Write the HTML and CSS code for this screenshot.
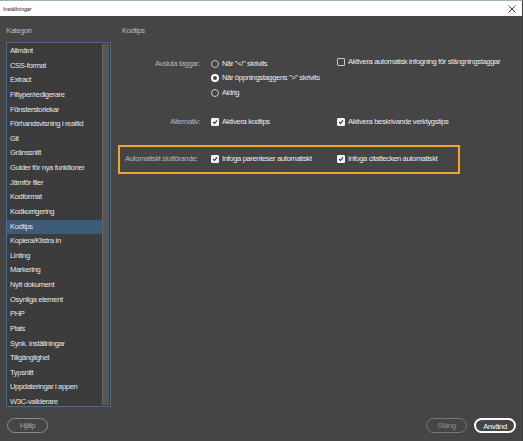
FILE: index.html
```html
<!DOCTYPE html>
<html lang="sv">
<head>
<meta charset="utf-8">
<title>Inställningar</title>
<link rel="stylesheet" href="styles.css">
</head>
<body>
<div class="window">
  <div class="titlebar">
    <span class="title">Inställningar</span>
    <svg class="close" width="8" height="8" viewBox="0 0 8 8"><path d="M0.5 0.5 L7.5 7.5 M7.5 0.5 L0.5 7.5" stroke="#222" stroke-width="0.9" fill="none"/></svg>
  </div>
  <div class="main">
    <div class="sidebar">
      <div class="heading">Kategori</div>
      <div class="list">
        <div class="items">
          <div class="item">Allmänt</div>
          <div class="item">CSS-format</div>
          <div class="item">Extract</div>
          <div class="item">Filtyper/redigerare</div>
          <div class="item">Fönsterstorlekar</div>
          <div class="item">Förhandsvisning i realtid</div>
          <div class="item">Git</div>
          <div class="item">Gränssnitt</div>
          <div class="item">Guider för nya funktioner</div>
          <div class="item">Jämför filer</div>
          <div class="item">Kodformat</div>
          <div class="item">Kodkorrigering</div>
          <div class="item selected">Kodtips</div>
          <div class="item">Kopiera/Klistra in</div>
          <div class="item">Linting</div>
          <div class="item">Markering</div>
          <div class="item">Nytt dokument</div>
          <div class="item">Osynliga element</div>
          <div class="item">PHP</div>
          <div class="item">Plats</div>
          <div class="item">Synk. inställningar</div>
          <div class="item">Tillgänglighet</div>
          <div class="item">Typsnitt</div>
          <div class="item">Uppdateringar i appen</div>
          <div class="item">W3C-validerare</div>
        </div>
        <div class="scrollbar"><div class="thumb"></div></div>
      </div>
    </div>
    <div class="content">
      <div class="heading pane-title">Kodtips</div>
      <div class="options">
        <div class="row">
          <div class="label">Avsluta taggar:</div>
          <div class="col">
            <div class="opt"><span class="radio"></span>När "&lt;/" skrivits</div>
            <div class="opt"><span class="radio on"></span>När öppningstaggens "&gt;" skrivits</div>
            <div class="opt"><span class="radio"></span>Aldrig</div>
          </div>
          <div class="col col2-up">
            <div class="opt"><span class="check"></span>Aktivera automatisk infogning för stängningstaggar</div>
          </div>
        </div>
        <div class="row">
          <div class="label">Alternativ:</div>
          <div class="col">
            <div class="opt"><span class="check on"><svg viewBox="0 0 8 8"><path d="M1.5 4.2 L3.3 6 L6.6 1.8" stroke="#2b2b2b" stroke-width="1.5" fill="none"/></svg></span>Aktivera kodtips</div>
          </div>
          <div class="col">
            <div class="opt"><span class="check on"><svg viewBox="0 0 8 8"><path d="M1.5 4.2 L3.3 6 L6.6 1.8" stroke="#2b2b2b" stroke-width="1.5" fill="none"/></svg></span>Aktivera beskrivande verktygstips</div>
          </div>
        </div>
        <div class="row boxed">
          <div class="label">Automatiskt slutförande:</div>
          <div class="col">
            <div class="opt"><span class="check on"><svg viewBox="0 0 8 8"><path d="M1.5 4.2 L3.3 6 L6.6 1.8" stroke="#2b2b2b" stroke-width="1.5" fill="none"/></svg></span>Infoga parenteser automatiskt</div>
          </div>
          <div class="col">
            <div class="opt"><span class="check on"><svg viewBox="0 0 8 8"><path d="M1.5 4.2 L3.3 6 L6.6 1.8" stroke="#2b2b2b" stroke-width="1.5" fill="none"/></svg></span>Infoga citattecken automatiskt</div>
          </div>
        </div>
      </div>
    </div>
  </div>
  <div class="footer">
    <button class="btn">Hjälp</button>
    <div class="footer-right">
      <button class="btn dim">Stäng</button>
      <button class="btn primary">Använd</button>
    </div>
  </div>
</div>
</body>
</html>
```
FILE: styles.css
```css
html, body {
  margin: 0;
  padding: 0;
}
body {
  width: 523px;
  height: 441px;
  overflow: hidden;
  background: #454545;
  font-family: "Liberation Sans", Arial, sans-serif;
  font-size: 7.6px;
  letter-spacing: -0.37px;
  color: #dcdcdc;
}
.window {
  width: 523px;
  height: 441px;
  box-sizing: border-box;
  border-top: 1px solid #9fb2b2;
  border-right: 1px solid #3a3a3a;
  display: flex;
  flex-direction: column;
}
.titlebar {
  height: 15px;
  background: #ffffff;
  display: flex;
  align-items: center;
  justify-content: space-between;
  padding: 0 6px 0 3px;
  flex: none;
}
.title {
  font-size: 5.3px;
  letter-spacing: 0;
  color: #111;
}
.close {
  display: block;
}
.main {
  display: flex;
  height: 391px;
  flex: none;
}
.sidebar {
  width: 105px;
  margin-left: 6px;
  display: flex;
  flex-direction: column;
}
.heading {
  height: 12px;
  line-height: 12px;
  margin-top: 9px;
  margin-bottom: 5px;
  color: #bababa;
}
.list {
  height: 365px;
  box-sizing: border-box;
  border: 1px solid #4d6a88;
  background: #3c3c3c;
  display: flex;
}
.items {
  flex: 1;
  padding-top: 1px;
}
.item {
  height: 14.63px;
  line-height: 14.63px;
  padding-left: 3px;
  color: #e6e6e6;
  white-space: nowrap;
}
.item.selected {
  background: #3e5a79;
}
.scrollbar {
  width: 7px;
  margin-right: 1px;
  padding: 1px 0;
  box-sizing: border-box;
}
.thumb {
  height: 100%;
  background: #565656;
  border-left: 1px solid #666;
  box-sizing: border-box;
}
.content {
  flex: 1;
  margin-left: 7px;
  display: flex;
  flex-direction: column;
}
.pane-title {
  padding-left: 4px;
}
.options {
  margin-top: 14.5px;
  display: flex;
  flex-direction: column;
  gap: 15px;
}
.row {
  display: grid;
  grid-template-columns: 93px 126px 1fr;
  line-height: 14.5px;
  width: 342px;
}
.label {
  text-align: right;
  padding-right: 11px;
  color: #b6b6b6;
  white-space: nowrap;
}
.row.boxed {
  grid-template-columns: 91px 126px 1fr;
  border: 2px solid #f2a531;
  padding: 5.5px 0 5.5px;
  width: 338px;
}
.row.boxed .label {
  text-align: left;
  padding-left: 5px;
  padding-right: 0;
}
.col2-up {
  margin-top: -2px;
}
.opt {
  display: flex;
  align-items: center;
  white-space: nowrap;
  color: #ececec;
}
.radio {
  width: 6px;
  height: 6px;
  border: 1px solid #c8c8c8;
  border-radius: 50%;
  margin-right: 3px;
  flex: none;
}
.radio.on {
  width: 4px;
  height: 4px;
  border: 2px solid #ffffff;
}
.check {
  width: 6px;
  height: 6px;
  border: 1px solid #c8c8c8;
  border-radius: 1px;
  margin-right: 3px;
  flex: none;
  display: flex;
}
.check.on {
  background: #f4f4f4;
  border-color: #f4f4f4;
}
.check svg {
  width: 6px;
  height: 6px;
  display: block;
}
.footer {
  flex: 1;
  display: flex;
  justify-content: space-between;
  align-items: flex-start;
  padding: 11px 6px 0 7px;
}
.footer-right {
  display: flex;
  gap: 7px;
}
.btn {
  width: 41px;
  height: 15px;
  box-sizing: border-box;
  border-radius: 8px;
  border: 1px solid #8a8a8a;
  background: transparent;
  color: #a8a8a8;
  font-family: inherit;
  font-size: 7.6px;
  letter-spacing: -0.37px;
  padding: 0;
  line-height: 13px;
}
.btn.dim {
  border-color: #777;
  color: #8e8e8e;
}
.btn.primary {
  width: 42px;
  border: 2px solid #ffffff;
  color: #ffffff;
}
```
